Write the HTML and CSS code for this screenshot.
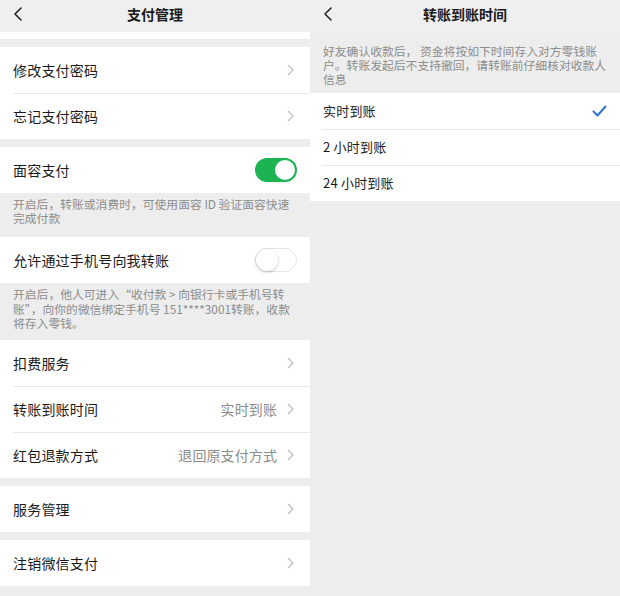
FILE: index.html
```html
<!DOCTYPE html>
<html lang="zh-CN">
<head>
<meta charset="utf-8">
<title>支付管理</title>
<link rel="stylesheet" href="styles.css">
</head>
<body>
<div class="screens">
  <section class="panel">
    <header class="nav">
      <span class="back"><svg width="10" height="14" viewBox="0 0 10 14"><polyline points="8,1 2,7 8,13" fill="none" stroke="#1f1f1f" stroke-width="1.5" stroke-linecap="round" stroke-linejoin="round"/></svg></span>
      <h1 class="title">支付管理</h1>
      <span></span>
    </header>
    <div class="card cut"></div>
    <div class="card first">
      <div class="row"><span class="label">修改支付密码</span><span class="chev"><svg width="7" height="12" viewBox="0 0 7 12"><polyline points="1,1 6,6 1,11" fill="none" stroke="#bdbdbd" stroke-width="1.2"/></svg></span></div>
      <div class="row"><span class="label">忘记支付密码</span><span class="chev"><svg width="7" height="12" viewBox="0 0 7 12"><polyline points="1,1 6,6 1,11" fill="none" stroke="#bdbdbd" stroke-width="1.2"/></svg></span></div>
    </div>
    <div class="card">
      <div class="row"><span class="label">面容支付</span><span class="toggle on"><span class="knob"></span></span></div>
    </div>
    <p class="desc d1">开启后，转账或消费时，可使用面容 ID 验证面容快速<br>完成付款</p>
    <div class="card">
      <div class="row"><span class="label">允许通过手机号向我转账</span><span class="toggle off"><span class="knob"></span></span></div>
    </div>
    <p class="desc d2">开启后，他人可进入“收付款 &gt; 向银行卡或手机号转<br>账”，向你的微信绑定手机号 151****3001转账，收款<br>将存入零钱。</p>
    <div class="card">
      <div class="row"><span class="label">扣费服务</span><span class="chev"><svg width="7" height="12" viewBox="0 0 7 12"><polyline points="1,1 6,6 1,11" fill="none" stroke="#bdbdbd" stroke-width="1.2"/></svg></span></div>
      <div class="row"><span class="label">转账到账时间</span><span class="value">实时到账</span><span class="chev"><svg width="7" height="12" viewBox="0 0 7 12"><polyline points="1,1 6,6 1,11" fill="none" stroke="#bdbdbd" stroke-width="1.2"/></svg></span></div>
      <div class="row"><span class="label">红包退款方式</span><span class="value">退回原支付方式</span><span class="chev"><svg width="7" height="12" viewBox="0 0 7 12"><polyline points="1,1 6,6 1,11" fill="none" stroke="#bdbdbd" stroke-width="1.2"/></svg></span></div>
    </div>
    <div class="card gap">
      <div class="row"><span class="label">服务管理</span><span class="chev"><svg width="7" height="12" viewBox="0 0 7 12"><polyline points="1,1 6,6 1,11" fill="none" stroke="#bdbdbd" stroke-width="1.2"/></svg></span></div>
    </div>
    <div class="card gap">
      <div class="row"><span class="label">注销微信支付</span><span class="chev"><svg width="7" height="12" viewBox="0 0 7 12"><polyline points="1,1 6,6 1,11" fill="none" stroke="#bdbdbd" stroke-width="1.2"/></svg></span></div>
    </div>
  </section>

  <section class="panel">
    <header class="nav">
      <span class="back"><svg width="10" height="14" viewBox="0 0 10 14"><polyline points="8,1 2,7 8,13" fill="none" stroke="#1f1f1f" stroke-width="1.5" stroke-linecap="round" stroke-linejoin="round"/></svg></span>
      <h1 class="title">转账到账时间</h1>
      <span></span>
    </header>
    <p class="desc intro">好友确认收款后， 资金将按如下时间存入对方零钱账<br>户。转账发起后不支持撤回，请转账前仔细核对收款人<br>信息</p>
    <div class="card options">
      <div class="opt"><span class="label">实时到账</span><span class="check"><svg width="15" height="12" viewBox="0 0 15 12"><polyline points="1.5,6.5 5.5,10.5 13.5,1.5" fill="none" stroke="#2f72d0" stroke-width="2" stroke-linecap="round" stroke-linejoin="round"/></svg></span></div>
      <div class="opt"><span class="label">2 小时到账</span></div>
      <div class="opt"><span class="label">24 小时到账</span></div>
    </div>
  </section>
</div>
</body>
</html>
```

FILE: styles.css
```css
* { box-sizing: border-box; }

html, body {
  margin: 0;
  padding: 0;
  background: #ededed;
}

body {
  font-family: "Noto Sans CJK SC", "Noto Sans", sans-serif;
  color: #1b1b1b;
}

.screens {
  display: flex;
  width: 620px;
  height: 596px;
  overflow: hidden;
}

.panel {
  width: 310px;
  flex: none;
  display: flex;
  flex-direction: column;
  background: #ededed;
}

.nav {
  height: 32px;
  padding-bottom: 4px;
  display: grid;
  grid-template-columns: 1fr auto 1fr;
  align-items: center;
  background: #efefef;
}

.back {
  display: flex;
  align-items: center;
  padding-left: 13px;
}

.title {
  margin: 0;
  font-size: 14px;
  font-weight: 700;
  line-height: 20px;
  color: #1a1a1a;
}

.card {
  background: #fff;
}

.card.cut {
  height: 7px;
}

.card.first {
  margin-top: 9px;
}

.card + .card {
  margin-top: 8px;
}

.row {
  height: 46px;
  display: flex;
  align-items: center;
  padding: 0 13px 0 13px;
}

.row + .row {
  background: linear-gradient(#e8e8e8, #e8e8e8) 13px 0 / calc(100% - 13px) 1px no-repeat, #fff;
}

.label {
  font-size: 14px;
  line-height: 20px;
  letter-spacing: 0.2px;
  flex: 1;
}

.value {
  font-size: 14px;
  color: #8c8c8c;
  margin-right: 10px;
  letter-spacing: 0.1px;
}

.chev {
  display: flex;
  align-items: center;
  padding-right: 3px;
}

.toggle {
  width: 42px;
  height: 24px;
  border-radius: 12px;
  display: flex;
  align-items: center;
  padding: 2px;
}

.toggle.on {
  background: #1cb453;
  justify-content: flex-end;
}

.toggle.off {
  background: #fff;
  border: 1px solid #e3e3e3;
  justify-content: flex-start;
  padding: 0;
}

.knob {
  width: 20px;
  height: 20px;
  border-radius: 50%;
  background: #fff;
}

.toggle.off .knob {
  width: 22px;
  height: 22px;
  box-shadow: 0 1px 3px rgba(0, 0, 0, 0.25);
}

.desc {
  margin: 0;
  font-size: 11.8px;
  color: #8c8c8c;
  padding: 0 13px;
}

.desc.d1 {
  height: 44px;
  padding-top: 4px;
  line-height: 14px;
}

.desc.d2 {
  height: 57px;
  padding-top: 4px;
  line-height: 14.5px;
}

.desc.d1 + .card,
.desc.d2 + .card {
  margin-top: 0;
}

.card.gap {
  margin-top: 8px;
}

.desc.intro {
  height: 61px;
  padding-top: 12px;
  line-height: 14px;
}

.opt {
  height: 36px;
  display: flex;
  align-items: center;
  padding: 0 13px 0 13px;
}

.opt + .opt {
  background: linear-gradient(#e8e8e8, #e8e8e8) 12px 0 / calc(100% - 12px) 1px no-repeat, #fff;
}

.opt .label {
  font-size: 13px;
}

.check {
  display: flex;
  align-items: center;
}
```
